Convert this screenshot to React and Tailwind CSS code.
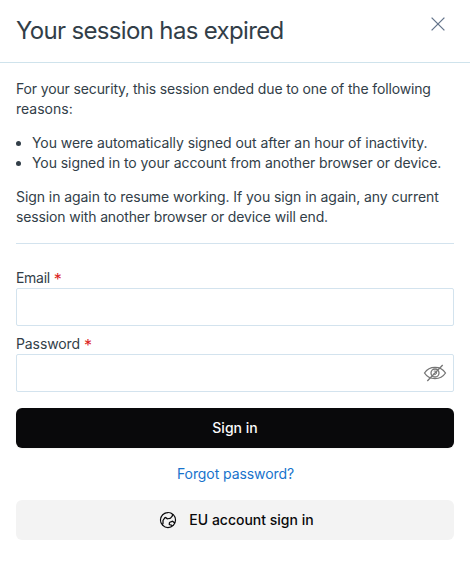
import { PiGlobeHemisphereEast } from "react-icons/pi";

function CloseIcon() {
  return (
    <svg width="14" height="14" viewBox="0 0 14 14" fill="none" stroke="#64748b" strokeWidth="1.3">
      <path d="M0.6 0.6 13.4 13.4M13.4 0.6 0.6 13.4" />
    </svg>
  );
}

function HiddenEyeIcon() {
  return (
    <svg width="24" height="24" viewBox="0 0 24 24" fill="none" stroke="#757575" strokeWidth="1.3">
      <path d="M1.5 12C4 8.2 7.8 6.3 12 6.3S20 8.2 22.5 12C20 15.8 16.2 17.7 12 17.7S4 15.8 1.5 12Z" />
      <circle cx="12" cy="12" r="4" />
      <path d="M10.8 10.3A1.8 1.8 0 1 1 10.5 13" strokeWidth="0.9" />
      <path d="M4.3 20 19.7 4" />
    </svg>
  );
}

function Field({ label, labelClass, type, children }) {
  return (
    <label className="block">
      <span className="flex h-5 items-center gap-1">
        <span className={labelClass}>{label}</span>
        <span className="pt-0.5 text-base leading-none text-[#dc1f1f]">*</span>
      </span>
      <span className="flex h-[38px] items-center rounded-xs border border-[#d3e3ee] pr-[6px]">
        <input type={type} className="h-full min-w-0 flex-1 px-2 outline-none" />
        {children}
      </span>
    </label>
  );
}

export default function App() {
  return (
    <div className="h-[564px] bg-white font-['Inter',sans-serif] text-sm text-[#323e48] antialiased">
      <header className="flex h-[63px] items-start justify-between border-b border-[#cfe3ec] pr-[25px] pl-4">
        <h1 className="pt-[15px] text-2xl font-normal tracking-[-0.66px]">Your session has expired</h1>
        <button type="button" aria-label="Close" className="mt-[17px]">
          <CloseIcon />
        </button>
      </header>
      <main className="px-4 pt-4">
        <p>
          <span className="tracking-[-0.14px]">For your security, this session ended due to one of the following</span>{" "}
          <br />
          reasons:
        </p>
        <ul className="my-[14px] tracking-[-0.07px]">
          {[
            "You were automatically signed out after an hour of inactivity.",
            "You signed in to your account from another browser or device.",
          ].map((reason) => (
            <li key={reason} className="flex items-center gap-[11px] whitespace-nowrap">
              <span className="size-[5px] rounded-full bg-[#323e48]" />
              {reason}
            </li>
          ))}
        </ul>
        <p>
          <span className="tracking-[-0.07px]">
            Sign in again to resume working. If you sign in again, any current
          </span>{" "}
          <br />
          <span className="tracking-[-0.14px]">session with another browser or device will end.</span>
        </p>
        <hr className="mt-4 border-[#d3e3ee]" />
        <form className="mt-6 flex flex-col">
          <Field label="Email" labelClass="tracking-[-0.3px]" type="email" />
          <div className="mt-2">
            <Field label="Password" labelClass="tracking-[-0.1px]" type="password">
              <HiddenEyeIcon />
            </Field>
          </div>
          <button type="button" className="mt-4 h-10 rounded-md bg-[#09090b] font-medium text-[#fafafa] shadow-xs">
            Sign in
          </button>
          <a href="#" className="mt-4 self-center pl-px tracking-[-0.08px] text-[#1873cc]">
            Forgot password?
          </a>
          <button
            type="button"
            className="mt-4 flex h-10 items-center justify-center gap-[11px] rounded-md bg-[#f3f3f3] pl-[2px] font-medium text-[#09090b]"
          >
            <PiGlobeHemisphereEast size={20} />
            EU account sign in
          </button>
        </form>
      </main>
    </div>
  );
}
